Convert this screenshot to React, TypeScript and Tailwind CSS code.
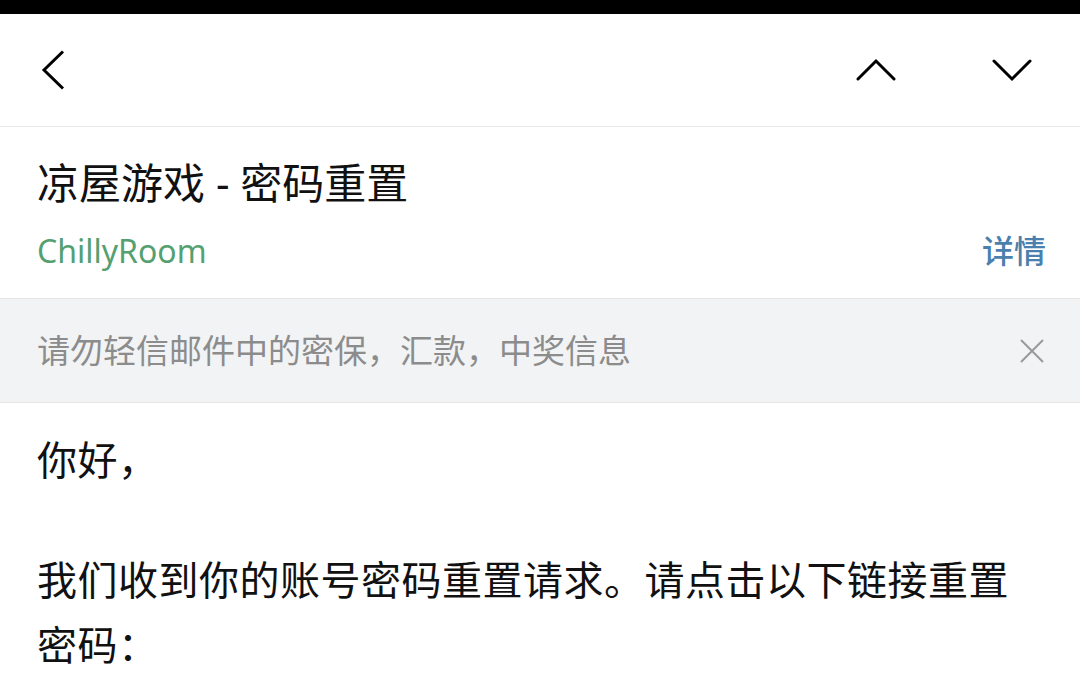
const font = { fontFamily: '"Noto Sans", "Noto Sans CJK SC", sans-serif' };

function Chevron({ d, className }: { d: string; className?: string }) {
  return (
    <svg viewBox="0 0 40 40" className={className} fill="none" stroke="currentColor" strokeWidth={3} strokeLinecap="round" strokeLinejoin="miter">
      <path d={d} />
    </svg>
  );
}

export default function App() {
  return (
    <div className="w-[1080px] h-[679px] bg-white overflow-hidden" style={font}>
      <div className="h-[14px] bg-black" />

      <div className="h-[113px] flex items-center justify-between border-b border-[#e9e9e9]">
        <button className="ml-[34px] w-10 h-10 flex items-center justify-center text-black">
          <svg viewBox="0 0 40 40" className="w-10 h-10" fill="none" stroke="currentColor" strokeWidth={3}>
            <path d="M29 1.5 L10 20 L29 38.5" />
          </svg>
        </button>
        <div className="flex items-center gap-[96px] mr-[48px] text-black">
          <Chevron d="M2 29 L20 11 L38 29" className="w-10 h-10" />
          <Chevron d="M2 11 L20 29 L38 11" className="w-10 h-10" />
        </div>
      </div>

      <div className="px-[37px] pt-[28px] pb-[27px] border-b border-[#e6e6e6]">
        <h1 className="text-[42px] leading-[56px] text-[#111]">凉屋游戏 - 密码重置</h1>
        <div className="flex items-center justify-between mt-[20px]">
          <span className="text-[32px] leading-[40px] text-[#55a071]">ChillyRoom</span>
          <span className="text-[32px] leading-[40px] text-[#4b7fae] font-medium -mr-[3px]">详情</span>
        </div>
      </div>

      <div className="h-[104px] bg-[#f2f3f5] border-b border-[#e6e6e6] flex items-center justify-between pl-[37px] pr-[36px]">
        <span className="text-[33px] leading-[40px] text-[#8c8c8c]">请勿轻信邮件中的密保，汇款，中奖信息</span>
        <svg viewBox="0 0 24 24" className="w-6 h-6 text-[#999]" fill="none" stroke="currentColor" strokeWidth={2}>
          <path d="M1 1 L23 23 M23 1 L1 23" />
        </svg>
      </div>

      <div className="pl-[37px] pr-[40px] pt-[24px] text-[40px] leading-[65px] tracking-[0.5px] text-[#111]">
        <p>你好，</p>
        <p className="mt-[55px]">我们收到你的账号密码重置请求。请点击以下链接重置密码：</p>
      </div>
    </div>
  );
}
